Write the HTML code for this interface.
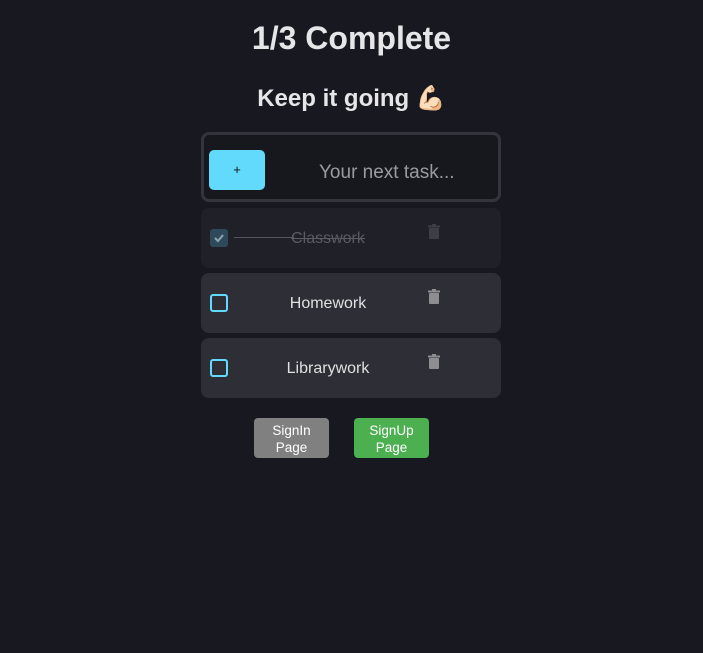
<!DOCTYPE html>
<html><head><meta charset="utf-8"><style>
*{margin:0;padding:0;box-sizing:border-box}
body{width:703px;height:653px;background:#181920;font-family:"Liberation Sans","DejaVu Sans",sans-serif;color:#e8e8ea;position:relative;overflow:hidden}
.abs{position:absolute}
h1{position:absolute;left:0;width:703px;top:20px;text-align:center;font-size:32px;font-weight:bold;color:#e6e6e8}
h2{position:absolute;left:0;width:703px;top:84px;text-align:center;font-size:24px;font-weight:bold;color:#e6e6e8}
.inp{left:201px;top:132px;width:300px;height:70px;border:3px solid #33343c;border-radius:8px;background:#17181e}
.add{left:209px;top:150px;width:56px;height:40px;background:#61dafb;border-radius:5px;color:#111;font-size:13px;text-align:center;line-height:40px}
.ph{left:319px;top:162px;font-size:19px;color:#9a9aa0}
.item{left:201px;width:300px;height:60px;border-radius:8px;background:#2e2e37}
.cb{position:absolute;left:9px;top:21px;width:18px;height:18px;border:2px solid #61dafb;border-radius:3px}
.txt{position:absolute;left:0;width:254px;text-align:center;top:21px;font-size:16px;color:#e0e0e2}
.trash{position:absolute;left:227px;top:16px}
.btn{top:418px;width:75px;height:40px;border-radius:4px;color:#fff;font-size:13.5px;text-align:center;line-height:17px;padding-top:4px}
</style></head><body>
<h1>1/3 Complete</h1>
<h2>Keep it going 💪🏻</h2>
<div class="abs inp"></div>
<div class="abs add">+</div>
<div class="abs ph">Your next task...</div>

<div class="abs item" style="top:208px;background:#1f2028">
  <div class="cb" style="background:#2e4a5a;border-color:#2e4a5a"><svg width="14" height="14" viewBox="0 0 14 14" style="position:absolute;left:0;top:0"><path d="M3 7l3 3 5-6" stroke="#8fa6b2" stroke-width="2" fill="none"/></svg></div>
  <div style="position:absolute;left:33px;top:29px;width:60px;height:1px;background:#55565c"></div>
  <div class="txt" style="color:#5a5b62;text-decoration:line-through;top:22px">Classwork</div>
  <svg class="trash" width="12" height="15" viewBox="0 0 12 15"><rect x="0" y="1.5" width="12" height="2" fill="#3e3f46"/><rect x="4" y="0" width="4" height="2" fill="#3e3f46"/><rect x="1" y="4" width="10" height="11" rx="1" fill="#3e3f46"/></svg>
</div>
<div class="abs item" style="top:273px">
  <div class="cb"></div>
  <div class="txt" style="top:22px">Homework</div>
  <svg class="trash" width="12" height="15" viewBox="0 0 12 15"><rect x="0" y="1.5" width="12" height="2" fill="#8d8d92"/><rect x="4" y="0" width="4" height="2" fill="#8d8d92"/><rect x="1" y="4" width="10" height="11" rx="1" fill="#8d8d92"/></svg>
</div>
<div class="abs item" style="top:338px">
  <div class="cb"></div>
  <div class="txt" style="top:22px">Librarywork</div>
  <svg class="trash" width="12" height="15" viewBox="0 0 12 15"><rect x="0" y="1.5" width="12" height="2" fill="#8d8d92"/><rect x="4" y="0" width="4" height="2" fill="#8d8d92"/><rect x="1" y="4" width="10" height="11" rx="1" fill="#8d8d92"/></svg>
</div>
<div class="abs btn" style="left:254px;background:#808080">SignIn<br>Page</div>
<div class="abs btn" style="left:354px;background:#4caf50">SignUp<br>Page</div>
</body></html>
